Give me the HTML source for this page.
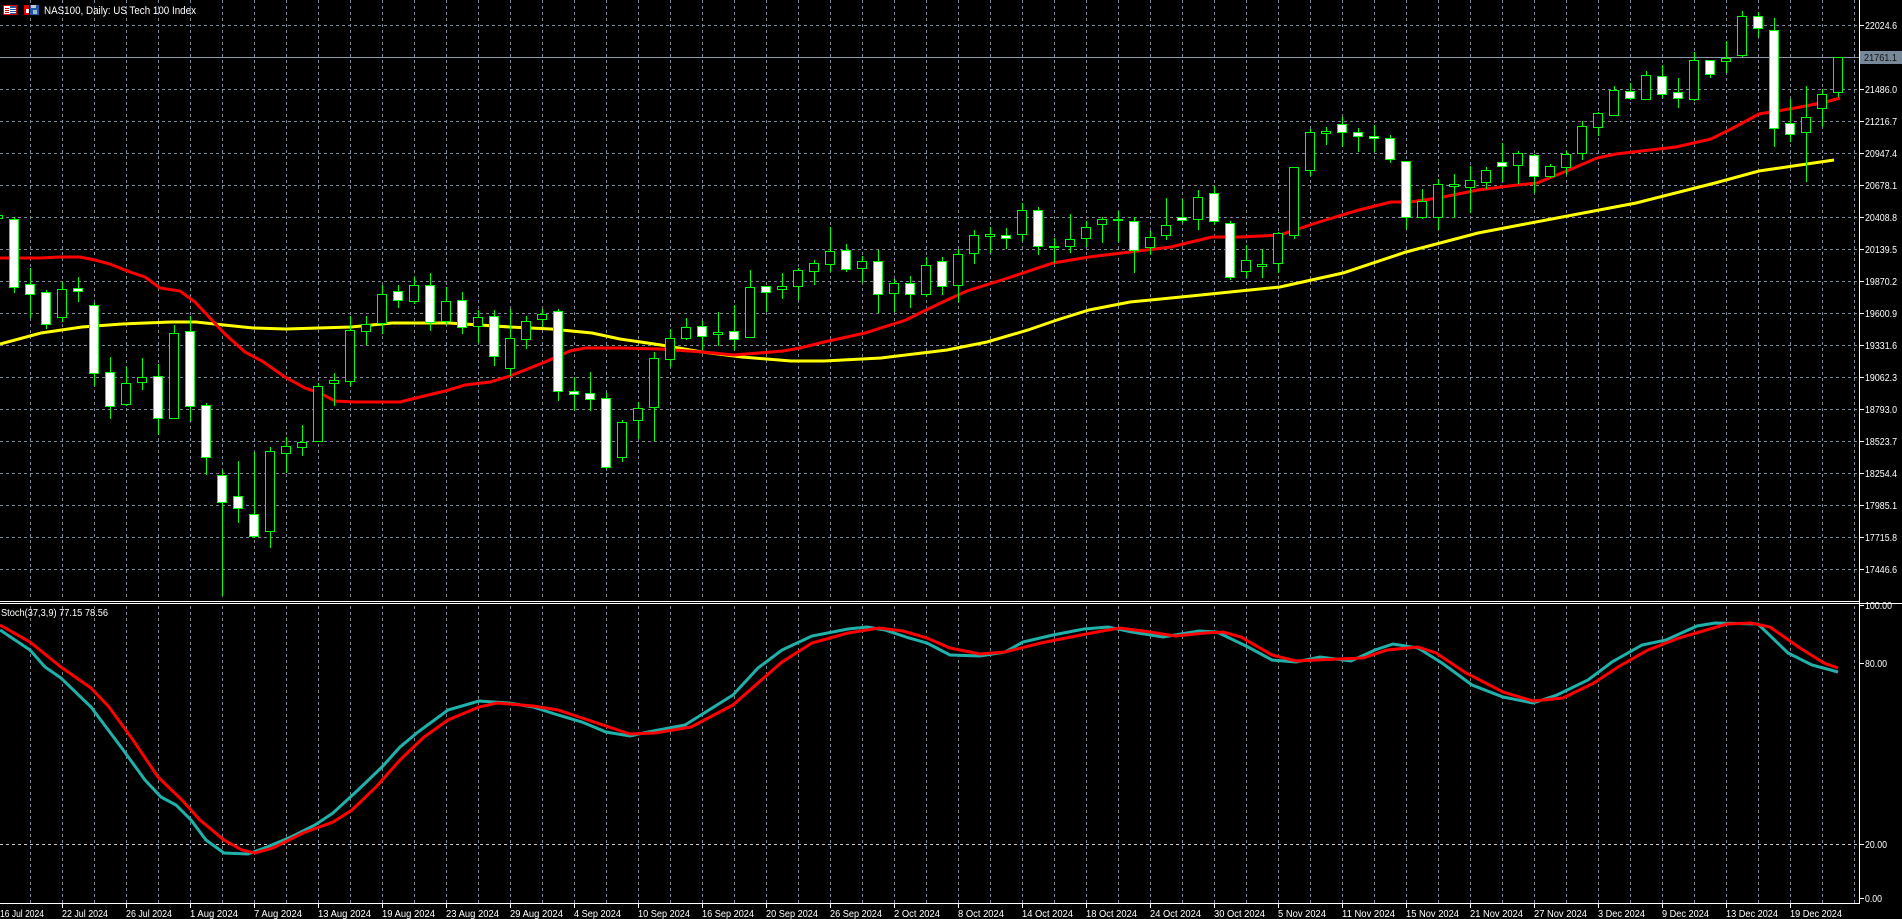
<!DOCTYPE html>
<html><head><meta charset="utf-8"><style>
html,body{margin:0;padding:0;background:#000;width:1902px;height:919px;overflow:hidden}
svg{display:block}
text{font-family:"Liberation Sans",sans-serif;fill:#fff}
</style></head><body>
<svg width="1902" height="919" viewBox="0 0 1902 919" xmlns="http://www.w3.org/2000/svg">
<defs>
<pattern id="pv" x="0" y="0" width="32" height="6" patternUnits="userSpaceOnUse"><rect x="30" y="0" width="1" height="3" fill="#7b8794"/></pattern>
<pattern id="ph" x="0" y="0" width="6" height="32" patternUnits="userSpaceOnUse"><rect x="0" y="25" width="3" height="1" fill="#7b8794"/></pattern>
<pattern id="ph2" x="0" y="0" width="6" height="4" patternUnits="userSpaceOnUse"><rect x="0" y="0" width="3" height="1" fill="#c8c8c8"/></pattern>
</defs>
<rect width="1902" height="919" fill="#000"/>
<rect x="0" y="0" width="1859" height="600" fill="url(#pv)"/>
<rect x="0" y="0" width="1858" height="580" fill="url(#ph)"/>
<line x1="0" y1="57.5" x2="1859" y2="57.5" stroke="#8a98a8" stroke-width="1"/>
<rect x="0" y="605" width="1859" height="298" fill="url(#pv)"/>
<rect x="0" y="663" width="1858" height="1" fill="url(#ph2)"/>
<rect x="0" y="844" width="1858" height="1" fill="url(#ph2)"/>

<polyline fill="none" stroke="#ffff00" stroke-width="3" points="0,344 41,333 82,327 122,324 171,322 196,322 224,325 253,328 286,329 351,327 392,323 449,323 510,327 551,329 592,333 620,339 661,345 702,352 742,357 791,361 824,361 881,358 947,350 987,342 1028,330 1057,320 1089,310 1130,302 1191,296 1240,291 1280,287 1343,273 1406,252 1478,233 1557,218 1636,203 1715,183 1759,171 1834,160"/>
<polyline fill="none" stroke="#ff0000" stroke-width="3" points="0,258 40,258 60,257 80,257 95,260 110,264 130,272 145,277 160,288 180,291 195,302 210,318 225,334 245,352 262,361 285,377 305,388 320,393 335,401 355,402 400,402 420,397 445,391 465,385 490,382 510,376 525,370 545,362 570,351 585,348 620,348 661,349 702,352 734,355 783,351 800,348 824,342 865,333 906,320 922,312 947,300 967,291 1008,278 1053,263 1089,257 1130,252 1171,247 1191,242 1212,237 1240,237 1280,235 1319,222 1359,210 1391,202 1410,202 1438,198 1478,190 1517,185 1537,183 1569,170 1597,158 1616,154 1676,147 1711,139 1735,127 1759,114 1795,108 1826,102 1840,98"/>

<path fill="none" stroke="#00ff00" stroke-width="1" d="M-1.5 210V224M14.5 217V293M30.5 268V318M46.5 290V329M62.5 282V322M78.5 277V302M94.5 303V386M110.5 357V419M126.5 367V406M142.5 358V390M158.5 364V435M174.5 325V419M190.5 316V421M206.5 403V475M222.5 470V596M238.5 461V523M254.5 452V538M270.5 447V548M286.5 437V473M302.5 425V456M318.5 383V442M334.5 373V406M350.5 316V386M366.5 316V345M382.5 285V334M398.5 285V308M414.5 277V304M430.5 273V331M446.5 287V324M462.5 292V334M478.5 310V343M494.5 310V366M510.5 309V376M526.5 316V349M542.5 309V327M558.5 309V401M574.5 377V411M590.5 372V411M606.5 393V469M622.5 420V462M638.5 402V439M654.5 352V441M670.5 329V367M686.5 318V340M702.5 321V350M718.5 312V346M734.5 305V350M750.5 270V337M766.5 286V312M782.5 273V299M798.5 268V300M814.5 260V285M830.5 227V272M846.5 244V272M862.5 256V283M878.5 250V313M894.5 279V312M910.5 276V308M926.5 257V297M942.5 257V295M958.5 249V302M974.5 230V264M990.5 227V253M1006.5 228V249M1022.5 203V241M1038.5 207V255M1054.5 238V263M1070.5 214V253M1086.5 221V247M1102.5 217V243M1118.5 211V242M1134.5 217V273M1150.5 231V255M1166.5 198V240M1182.5 199V223M1198.5 190V230M1214.5 186V225M1230.5 221V280M1246.5 245V278M1262.5 249V278M1278.5 232V273M1294.5 167V239M1310.5 129V176M1326.5 127V145M1342.5 117V147M1358.5 128V152M1374.5 125V152M1390.5 135V163M1406.5 161V229M1422.5 189V219M1438.5 179V230M1454.5 174V218M1470.5 166V213M1486.5 167V189M1502.5 143V182M1518.5 151V184M1534.5 154V193M1550.5 164V178M1566.5 151V175M1582.5 121V160M1598.5 112V136M1614.5 86V116M1630.5 83V100M1646.5 71V100M1662.5 65V98M1678.5 78V108M1694.5 52V101M1710.5 60V78M1726.5 41V73M1742.5 11V57M1758.5 12V37M1774.5 18V147M1790.5 99V142M1806.5 86V182M1822.5 89V127M1838.5 57V97"/>

<g fill="#fff" stroke="#00ff00" stroke-width="1">
<rect x="9.5" y="219.5" width="9" height="68"/>
<rect x="25.5" y="284.5" width="9" height="10"/>
<rect x="41.5" y="292.5" width="9" height="32"/>
<rect x="73.5" y="288.5" width="9" height="3"/>
<rect x="89.5" y="305.5" width="9" height="68"/>
<rect x="105.5" y="372.5" width="9" height="34"/>
<rect x="153.5" y="376.5" width="9" height="42"/>
<rect x="185.5" y="331.5" width="9" height="75"/>
<rect x="201.5" y="405.5" width="9" height="52"/>
<rect x="217.5" y="475.5" width="9" height="27"/>
<rect x="233.5" y="496.5" width="9" height="12"/>
<rect x="249.5" y="514.5" width="9" height="22"/>
<rect x="393.5" y="291.5" width="9" height="9"/>
<rect x="425.5" y="285.5" width="9" height="37"/>
<rect x="457.5" y="300.5" width="9" height="27"/>
<rect x="489.5" y="316.5" width="9" height="40"/>
<rect x="553.5" y="311.5" width="9" height="80"/>
<rect x="569.5" y="391.5" width="9" height="3"/>
<rect x="585.5" y="393.5" width="9" height="6"/>
<rect x="601.5" y="398.5" width="9" height="69"/>
<rect x="697.5" y="326.5" width="9" height="10"/>
<rect x="729.5" y="331.5" width="9" height="8"/>
<rect x="761.5" y="286.5" width="9" height="6"/>
<rect x="841.5" y="250.5" width="9" height="19"/>
<rect x="873.5" y="261.5" width="9" height="33"/>
<rect x="905.5" y="283.5" width="9" height="11"/>
<rect x="937.5" y="261.5" width="9" height="25"/>
<rect x="1001.5" y="235.5" width="9" height="3"/>
<rect x="1033.5" y="210.5" width="9" height="36"/>
<rect x="1129.5" y="221.5" width="9" height="29"/>
<rect x="1177.5" y="217.5" width="9" height="3"/>
<rect x="1209.5" y="193.5" width="9" height="28"/>
<rect x="1225.5" y="223.5" width="9" height="54"/>
<rect x="1337.5" y="124.5" width="9" height="8"/>
<rect x="1353.5" y="132.5" width="9" height="4"/>
<rect x="1369.5" y="136.5" width="9" height="2"/>
<rect x="1385.5" y="138.5" width="9" height="21"/>
<rect x="1401.5" y="161.5" width="9" height="56"/>
<rect x="1497.5" y="162.5" width="9" height="4"/>
<rect x="1529.5" y="155.5" width="9" height="21"/>
<rect x="1625.5" y="91.5" width="9" height="7"/>
<rect x="1657.5" y="76.5" width="9" height="18"/>
<rect x="1673.5" y="92.5" width="9" height="6"/>
<rect x="1705.5" y="60.5" width="9" height="14"/>
<rect x="1753.5" y="16.5" width="9" height="12"/>
<rect x="1769.5" y="30.5" width="9" height="98"/>
<rect x="1785.5" y="123.5" width="9" height="11"/>
</g>
<g fill="#000" stroke="#00ff00" stroke-width="1">
<rect x="-6.5" y="215.5" width="9" height="3"/>
<rect x="57.5" y="289.5" width="9" height="28"/>
<rect x="121.5" y="383.5" width="9" height="21"/>
<rect x="137.5" y="377.5" width="9" height="5"/>
<rect x="169.5" y="333.5" width="9" height="85"/>
<rect x="265.5" y="451.5" width="9" height="80"/>
<rect x="281.5" y="446.5" width="9" height="7"/>
<rect x="297.5" y="442.5" width="9" height="5"/>
<rect x="313.5" y="386.5" width="9" height="55"/>
<rect x="329.5" y="380.5" width="9" height="3"/>
<rect x="345.5" y="330.5" width="9" height="51"/>
<rect x="361.5" y="324.5" width="9" height="7"/>
<rect x="377.5" y="294.5" width="9" height="29"/>
<rect x="409.5" y="285.5" width="9" height="16"/>
<rect x="441.5" y="301.5" width="9" height="20"/>
<rect x="473.5" y="317.5" width="9" height="9"/>
<rect x="505.5" y="338.5" width="9" height="30"/>
<rect x="521.5" y="321.5" width="9" height="18"/>
<rect x="537.5" y="314.5" width="9" height="5"/>
<rect x="617.5" y="422.5" width="9" height="35"/>
<rect x="633.5" y="408.5" width="9" height="12"/>
<rect x="649.5" y="358.5" width="9" height="49"/>
<rect x="665.5" y="338.5" width="9" height="21"/>
<rect x="681.5" y="327.5" width="9" height="11"/>
<rect x="713.5" y="332.5" width="9" height="2"/>
<rect x="745.5" y="287.5" width="9" height="50"/>
<rect x="777.5" y="286.5" width="9" height="3"/>
<rect x="793.5" y="270.5" width="9" height="16"/>
<rect x="809.5" y="263.5" width="9" height="8"/>
<rect x="825.5" y="251.5" width="9" height="13"/>
<rect x="857.5" y="261.5" width="9" height="7"/>
<rect x="889.5" y="283.5" width="9" height="10"/>
<rect x="921.5" y="265.5" width="9" height="29"/>
<rect x="953.5" y="254.5" width="9" height="31"/>
<rect x="969.5" y="235.5" width="9" height="18"/>
<rect x="985.5" y="234.5" width="9" height="2"/>
<rect x="1017.5" y="210.5" width="9" height="24"/>
<rect x="1049.5" y="246.5" width="9" height="1"/>
<rect x="1065.5" y="239.5" width="9" height="7"/>
<rect x="1081.5" y="227.5" width="9" height="11"/>
<rect x="1097.5" y="219.5" width="9" height="5"/>
<rect x="1113.5" y="219.5" width="9" height="1"/>
<rect x="1145.5" y="237.5" width="9" height="10"/>
<rect x="1161.5" y="225.5" width="9" height="10"/>
<rect x="1193.5" y="197.5" width="9" height="22"/>
<rect x="1241.5" y="260.5" width="9" height="11"/>
<rect x="1257.5" y="264.5" width="9" height="2"/>
<rect x="1273.5" y="233.5" width="9" height="30"/>
<rect x="1289.5" y="167.5" width="9" height="68"/>
<rect x="1305.5" y="132.5" width="9" height="38"/>
<rect x="1321.5" y="131.5" width="9" height="2"/>
<rect x="1417.5" y="201.5" width="9" height="16"/>
<rect x="1433.5" y="184.5" width="9" height="33"/>
<rect x="1449.5" y="184.5" width="9" height="2"/>
<rect x="1465.5" y="180.5" width="9" height="7"/>
<rect x="1481.5" y="170.5" width="9" height="12"/>
<rect x="1513.5" y="153.5" width="9" height="12"/>
<rect x="1545.5" y="166.5" width="9" height="10"/>
<rect x="1561.5" y="154.5" width="9" height="13"/>
<rect x="1577.5" y="126.5" width="9" height="27"/>
<rect x="1593.5" y="113.5" width="9" height="14"/>
<rect x="1609.5" y="90.5" width="9" height="25"/>
<rect x="1641.5" y="75.5" width="9" height="24"/>
<rect x="1689.5" y="60.5" width="9" height="39"/>
<rect x="1721.5" y="58.5" width="9" height="3"/>
<rect x="1737.5" y="16.5" width="9" height="39"/>
<rect x="1817.5" y="94.5" width="9" height="14"/>
<rect x="1801.5" y="117.5" width="9" height="15"/>
<rect x="1833.5" y="57.5" width="9" height="35"/>
</g>

<polyline fill="none" stroke="#20b2aa" stroke-width="3" points="0,630 30,650 45,667 61,678 91,707 121,747 145,780 161,797 176,805 191,820 206,840 224,853 248,854 267,847 291,837 315,825 333,813 358,790 382,767 400,747 418,732 448,710 479,701 509,703 533,707 558,715 582,722 606,732 630,736 648,732 685,725 709,710 733,695 758,668 782,650 812,636 848,629 867,627 885,630 909,638 927,643 950,655 980,656 1005,652 1023,642 1053,635 1084,629 1108,627 1132,632 1163,637 1199,631 1217,632 1248,647 1272,660 1296,662 1320,657 1351,661 1375,650 1393,644 1418,648 1442,663 1472,685 1503,697 1533,703 1557,695 1588,680 1612,662 1642,645 1666,640 1697,626 1715,623 1758,624 1788,653 1812,665 1838,672"/>
<polyline fill="none" stroke="#ff0000" stroke-width="3" points="0,625 30,642 61,667 91,688 109,707 133,740 158,777 182,800 200,820 224,840 242,850 255,853 273,848 303,833 333,822 352,810 376,787 400,760 424,737 448,720 479,707 497,703 533,706 558,710 594,722 630,734 655,733 691,727 733,705 758,683 782,662 812,643 848,633 879,628 903,631 927,638 950,648 980,654 1005,652 1041,643 1071,637 1102,631 1120,628 1150,632 1175,636 1205,633 1223,632 1241,637 1272,655 1296,661 1339,659 1363,658 1387,650 1418,647 1436,653 1466,673 1503,692 1533,701 1563,698 1594,683 1618,667 1648,650 1679,638 1703,631 1727,624 1751,623 1770,627 1800,648 1824,663 1838,668"/>

<line x1="0" y1="601.5" x2="1859" y2="601.5" stroke="#fff"/>
<line x1="0" y1="603.5" x2="1902" y2="603.5" stroke="#fff"/>
<line x1="1859.5" y1="0" x2="1859.5" y2="904" stroke="#fff"/>
<line x1="0" y1="903.5" x2="1860" y2="903.5" stroke="#fff"/>

<path stroke="#fff" d="M1860 25.5h4M1860 89.5h4M1860 121.5h4M1860 153.5h4M1860 185.5h4M1860 217.5h4M1860 249.5h4M1860 281.5h4M1860 313.5h4M1860 345.5h4M1860 377.5h4M1860 409.5h4M1860 441.5h4M1860 473.5h4M1860 505.5h4M1860 537.5h4M1860 569.5h4M1860 605.5h4M1860 663.5h4M1860 844.5h4M1860 898.5h4"/>
<rect x="1860" y="51" width="42" height="13" fill="#778899"/>
<g font-size="10">
<text x="1865" y="29" textLength="32" lengthAdjust="spacingAndGlyphs">22024.6</text>
<text x="1864" y="61" textLength="33" lengthAdjust="spacingAndGlyphs" style="fill:#111">21761.1</text>
<text x="1865" y="93" textLength="32" lengthAdjust="spacingAndGlyphs">21486.0</text>
<text x="1865" y="125" textLength="32" lengthAdjust="spacingAndGlyphs">21216.7</text>
<text x="1865" y="157" textLength="32" lengthAdjust="spacingAndGlyphs">20947.4</text>
<text x="1865" y="189" textLength="32" lengthAdjust="spacingAndGlyphs">20678.1</text>
<text x="1865" y="221" textLength="32" lengthAdjust="spacingAndGlyphs">20408.8</text>
<text x="1865" y="253" textLength="32" lengthAdjust="spacingAndGlyphs">20139.5</text>
<text x="1865" y="285" textLength="32" lengthAdjust="spacingAndGlyphs">19870.2</text>
<text x="1865" y="317" textLength="32" lengthAdjust="spacingAndGlyphs">19600.9</text>
<text x="1865" y="349" textLength="32" lengthAdjust="spacingAndGlyphs">19331.6</text>
<text x="1865" y="381" textLength="32" lengthAdjust="spacingAndGlyphs">19062.3</text>
<text x="1865" y="413" textLength="32" lengthAdjust="spacingAndGlyphs">18793.0</text>
<text x="1865" y="445" textLength="32" lengthAdjust="spacingAndGlyphs">18523.7</text>
<text x="1865" y="477" textLength="32" lengthAdjust="spacingAndGlyphs">18254.4</text>
<text x="1865" y="509" textLength="32" lengthAdjust="spacingAndGlyphs">17985.1</text>
<text x="1865" y="541" textLength="32" lengthAdjust="spacingAndGlyphs">17715.8</text>
<text x="1865" y="573" textLength="32" lengthAdjust="spacingAndGlyphs">17446.6</text>
<text x="1865" y="609" textLength="27" lengthAdjust="spacingAndGlyphs">100.00</text>
<text x="1865" y="667" textLength="22" lengthAdjust="spacingAndGlyphs">80.00</text>
<text x="1865" y="848" textLength="22" lengthAdjust="spacingAndGlyphs">20.00</text>
<text x="1865" y="902" textLength="17" lengthAdjust="spacingAndGlyphs">0.00</text>
</g>

<path stroke="#fff" d="M62.5 904v4M126.5 904v4M190.5 904v4M254.5 904v4M318.5 904v4M382.5 904v4M446.5 904v4M510.5 904v4M574.5 904v4M638.5 904v4M702.5 904v4M766.5 904v4M830.5 904v4M894.5 904v4M958.5 904v4M1022.5 904v4M1086.5 904v4M1150.5 904v4M1214.5 904v4M1278.5 904v4M1342.5 904v4M1406.5 904v4M1470.5 904v4M1534.5 904v4M1598.5 904v4M1662.5 904v4M1726.5 904v4M1790.5 904v4"/>
<g font-size="10">
<text x="0" y="917" textLength="44" lengthAdjust="spacingAndGlyphs">16 Jul 2024</text>
<text x="62" y="917" textLength="46" lengthAdjust="spacingAndGlyphs">22 Jul 2024</text>
<text x="126" y="917" textLength="46" lengthAdjust="spacingAndGlyphs">26 Jul 2024</text>
<text x="190" y="917" textLength="48" lengthAdjust="spacingAndGlyphs">1 Aug 2024</text>
<text x="254" y="917" textLength="48" lengthAdjust="spacingAndGlyphs">7 Aug 2024</text>
<text x="318" y="917" textLength="53" lengthAdjust="spacingAndGlyphs">13 Aug 2024</text>
<text x="382" y="917" textLength="53" lengthAdjust="spacingAndGlyphs">19 Aug 2024</text>
<text x="446" y="917" textLength="53" lengthAdjust="spacingAndGlyphs">23 Aug 2024</text>
<text x="510" y="917" textLength="53" lengthAdjust="spacingAndGlyphs">29 Aug 2024</text>
<text x="574" y="917" textLength="47" lengthAdjust="spacingAndGlyphs">4 Sep 2024</text>
<text x="638" y="917" textLength="52" lengthAdjust="spacingAndGlyphs">10 Sep 2024</text>
<text x="702" y="917" textLength="52" lengthAdjust="spacingAndGlyphs">16 Sep 2024</text>
<text x="766" y="917" textLength="52" lengthAdjust="spacingAndGlyphs">20 Sep 2024</text>
<text x="830" y="917" textLength="52" lengthAdjust="spacingAndGlyphs">26 Sep 2024</text>
<text x="894" y="917" textLength="46" lengthAdjust="spacingAndGlyphs">2 Oct 2024</text>
<text x="958" y="917" textLength="46" lengthAdjust="spacingAndGlyphs">8 Oct 2024</text>
<text x="1022" y="917" textLength="51" lengthAdjust="spacingAndGlyphs">14 Oct 2024</text>
<text x="1086" y="917" textLength="51" lengthAdjust="spacingAndGlyphs">18 Oct 2024</text>
<text x="1150" y="917" textLength="51" lengthAdjust="spacingAndGlyphs">24 Oct 2024</text>
<text x="1214" y="917" textLength="51" lengthAdjust="spacingAndGlyphs">30 Oct 2024</text>
<text x="1278" y="917" textLength="48" lengthAdjust="spacingAndGlyphs">5 Nov 2024</text>
<text x="1342" y="917" textLength="53" lengthAdjust="spacingAndGlyphs">11 Nov 2024</text>
<text x="1406" y="917" textLength="53" lengthAdjust="spacingAndGlyphs">15 Nov 2024</text>
<text x="1470" y="917" textLength="53" lengthAdjust="spacingAndGlyphs">21 Nov 2024</text>
<text x="1534" y="917" textLength="53" lengthAdjust="spacingAndGlyphs">27 Nov 2024</text>
<text x="1598" y="917" textLength="47" lengthAdjust="spacingAndGlyphs">3 Dec 2024</text>
<text x="1662" y="917" textLength="47" lengthAdjust="spacingAndGlyphs">9 Dec 2024</text>
<text x="1726" y="917" textLength="52" lengthAdjust="spacingAndGlyphs">13 Dec 2024</text>
<text x="1790" y="917" textLength="52" lengthAdjust="spacingAndGlyphs">19 Dec 2024</text>
</g>

<g>
<rect x="3.5" y="5.5" width="13" height="9" fill="#fff" stroke="#e00000"/>
<rect x="10" y="6" width="6" height="8" fill="#1e5aa8"/>
<path stroke="#e00000" d="M5 8.5h4M5 10.5h4M5 12.5h4"/>
<path stroke="#fff" d="M10 8.5h6M10 10.5h6M10 12.5h6"/>
<rect x="24" y="5" width="5" height="10" fill="#e00000"/>
<rect x="26" y="9" width="3" height="4" fill="#fff"/>
<rect x="30" y="5" width="9" height="10" fill="#1e5aa8"/>
<rect x="31" y="5" width="5" height="3" fill="#c0c8d0"/>
<rect x="33" y="10" width="4" height="4" fill="#a0b8d0"/>
</g>
<text x="44" y="14" font-size="11" textLength="152" lengthAdjust="spacingAndGlyphs">NAS100, Daily:  US Tech 100 Index</text>
<text x="1" y="616" font-size="10" textLength="107" lengthAdjust="spacingAndGlyphs">Stoch(37,3,9) 77.15 78.56</text>
</svg>
</body></html>
